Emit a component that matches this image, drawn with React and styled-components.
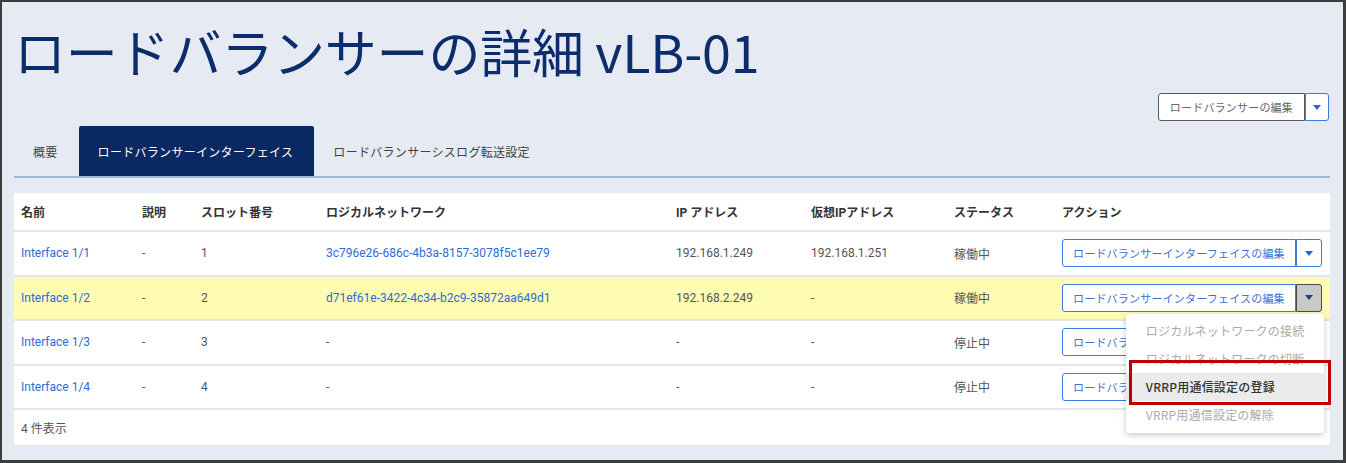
import React from "react";
import styled, { createGlobalStyle } from "styled-components";

const GlobalStyle = createGlobalStyle`
  html, body {
    margin: 0;
    padding: 0;
  }
  body {
    font-family: Roboto, "Noto Sans CJK JP", sans-serif;
  }
`;

const Frame = styled.div`
  box-sizing: border-box;
  width: 1346px;
  height: 463px;
  border: 2px solid #3d3d3d;
  border-right-width: 3px;
  border-bottom-width: 3px;
  background: #e6eaf3;
  padding: 0 13px 0 12px;
  overflow: hidden;
`;

const Title = styled.h1`
  margin: 0;
  padding-top: 18px;
  height: 62px;
  line-height: 62px;
  font-family: "Noto Sans CJK JP", sans-serif;
  font-size: 52px;
  font-weight: 400;
  letter-spacing: -0.2px;
  color: #0d2c6c;
  white-space: nowrap;
`;

const Toolbar = styled.div`
  display: flex;
  justify-content: flex-end;
  margin-top: 11px;
  padding-right: 1px;
`;

const Split = styled.div`
  position: relative;
  display: inline-flex;
  height: 28px;
`;

const MainButton = styled.button`
  box-sizing: border-box;
  height: 100%;
  padding: 0 ${(p) => (p.$wide ? 10 : 11)}px;
  background: #fff;
  border: 1.5px solid ${(p) => (p.$dark ? "#5a5a5a" : "#3b7be0")};
  border-radius: 3px 0 0 3px;
  color: ${(p) => (p.$dark ? "#666" : "#3a72d4")};
  font-family: "Noto Sans CJK JP", sans-serif;
  font-size: 11px;
  letter-spacing: 0.2px;
  white-space: nowrap;
`;

const CaretButton = styled.button`
  box-sizing: border-box;
  width: ${(p) => (p.$small ? 24 : 26)}px;
  height: 100%;
  display: flex;
  align-items: center;
  justify-content: center;
  padding: 0;
  background: ${(p) => (p.$pressed ? "#c9c9c9" : "#fff")};
  border: 1.5px solid ${(p) => (p.$pressed ? "#4a4a4a" : "#3b7be0")};
  border-left-width: 1px;
  border-radius: 0 3px 3px 0;
`;

const Caret = styled.span`
  width: 0;
  height: 0;
  border-left: 4px solid transparent;
  border-right: 4px solid transparent;
  border-top: 5px solid ${(p) => (p.$pressed ? "#1f3c73" : "#2b66c8")};
`;

const TabBar = styled.div`
  display: flex;
  margin-top: 5px;
  border-bottom: 2px solid #a2b4d8;
`;

const Tab = styled.div`
  height: 50px;
  display: flex;
  align-items: center;
  padding: 0 21px 0 19px;
  border-radius: 2px 2px 0 0;
  background: ${(p) => (p.$active ? "#0a2862" : "transparent")};
  color: ${(p) => (p.$active ? "#fff" : "#444")};
  font-family: "Noto Sans CJK JP", sans-serif;
  font-size: 12px;
  letter-spacing: 0.3px;
`;

const Card = styled.div`
  margin-top: 15px;
  background: #fff;
`;

const Table = styled.table`
  width: 100%;
  table-layout: fixed;
  border-collapse: separate;
  border-spacing: 0;
`;

const Th = styled.th`
  height: 37px;
  padding: 0 7px;
  text-align: left;
  border-bottom: 2px solid #e4e4e4;
  color: #333;
  font-size: 12px;
  font-weight: 700;
  white-space: nowrap;
`;

const Tr = styled.tr`
  background: ${(p) => (p.$selected ? "#fefbb2" : "#fff")};
`;

const Td = styled.td`
  height: 42.5px;
  padding: 0 7px;
  border-bottom: 2px solid #e4e4e4;
  color: ${(p) => (p.$link ? "#2b6cd8" : "#555")};
  font-size: 12px;
  white-space: nowrap;
  overflow: ${(p) => (p.$visible ? "visible" : "hidden")};
`;

const Footer = styled.div`
  height: 35px;
  display: flex;
  align-items: center;
  padding-left: 7px;
  color: #555;
  font-size: 12px;
`;

const Menu = styled.div`
  position: absolute;
  top: calc(100% + 2px);
  right: -2px;
  width: 198px;
  padding: 3px 0 4px;
  background: #fff;
  border-radius: 3px;
  box-shadow: 0 2px 6px rgba(0, 0, 0, 0.22);
  z-index: 5;
`;

const MenuItem = styled.div`
  height: 28px;
  display: flex;
  align-items: center;
  padding: 0 20px;
  background: ${(p) => (p.$hover ? "#ebebeb" : "transparent")};
  color: ${(p) => (p.$disabled ? "#aaa" : "#333")};
  font-family: "Noto Sans CJK JP", sans-serif;
  font-size: 12px;
  font-weight: ${(p) => (p.$hover ? 500 : 400)};
  letter-spacing: 0.2px;
  white-space: nowrap;
`;

const Highlight = styled.div`
  position: absolute;
  left: 3px;
  top: 46px;
  width: 202px;
  height: 45px;
  box-sizing: border-box;
  border: 3px solid #c00000;
  pointer-events: none;
`;

const columns = [
  { label: "名前", width: 121 },
  { label: "説明", width: 59 },
  { label: "スロット番号", width: 125 },
  { label: "ロジカルネットワーク", width: 350 },
  { label: "IP アドレス", width: 135 },
  { label: "仮想IPアドレス", width: 143 },
  { label: "ステータス", width: 108 },
  { label: "アクション", width: 275 },
];

const rows = [
  {
    name: "Interface 1/1",
    slot: "1",
    network: "3c796e26-686c-4b3a-8157-3078f5c1ee79",
    ip: "192.168.1.249",
    vip: "192.168.1.251",
    status: "稼働中",
  },
  {
    name: "Interface 1/2",
    slot: "2",
    network: "d71ef61e-3422-4c34-b2c9-35872aa649d1",
    ip: "192.168.2.249",
    vip: "-",
    status: "稼働中",
    open: true,
  },
  { name: "Interface 1/3", slot: "3", network: "-", ip: "-", vip: "-", status: "停止中" },
  { name: "Interface 1/4", slot: "4", network: "-", ip: "-", vip: "-", status: "停止中" },
];

const menuItems = [
  { label: "ロジカルネットワークの接続", disabled: true },
  { label: "ロジカルネットワークの切断", disabled: true },
  { label: "VRRP用通信設定の登録", hover: true },
  { label: "VRRP用通信設定の解除", disabled: true },
];

const ActionMenu = () => (
  <Menu>
    {menuItems.map((m) => (
      <MenuItem key={m.label} $disabled={m.disabled} $hover={m.hover}>
        {m.label}
      </MenuItem>
    ))}
    <Highlight />
  </Menu>
);

export default function App() {
  return (
    <Frame>
      <GlobalStyle />
      <Title>ロードバランサーの詳細 vLB-01</Title>
      <Toolbar>
        <Split>
          <MainButton $dark>ロードバランサーの編集</MainButton>
          <CaretButton $small>
            <Caret />
          </CaretButton>
        </Split>
      </Toolbar>
      <TabBar>
        <Tab>概要</Tab>
        <Tab $active>ロードバランサーインターフェイス</Tab>
        <Tab>ロードバランサーシスログ転送設定</Tab>
      </TabBar>
      <Card>
        <Table>
          <colgroup>
            {columns.map((c) => (
              <col key={c.label} style={{ width: c.width }} />
            ))}
          </colgroup>
          <thead>
            <tr>
              {columns.map((c) => (
                <Th key={c.label}>{c.label}</Th>
              ))}
            </tr>
          </thead>
          <tbody>
            {rows.map((r) => (
              <Tr key={r.name} $selected={r.open}>
                <Td $link>{r.name}</Td>
                <Td>-</Td>
                <Td>{r.slot}</Td>
                <Td $link={r.network !== "-"}>{r.network}</Td>
                <Td>{r.ip}</Td>
                <Td>{r.vip}</Td>
                <Td>{r.status}</Td>
                <Td $visible>
                  <Split>
                    <MainButton $wide>ロードバランサーインターフェイスの編集</MainButton>
                    <CaretButton $pressed={r.open}>
                      <Caret $pressed={r.open} />
                    </CaretButton>
                    {r.open && <ActionMenu />}
                  </Split>
                </Td>
              </Tr>
            ))}
          </tbody>
        </Table>
        <Footer>4 件表示</Footer>
      </Card>
    </Frame>
  );
}
